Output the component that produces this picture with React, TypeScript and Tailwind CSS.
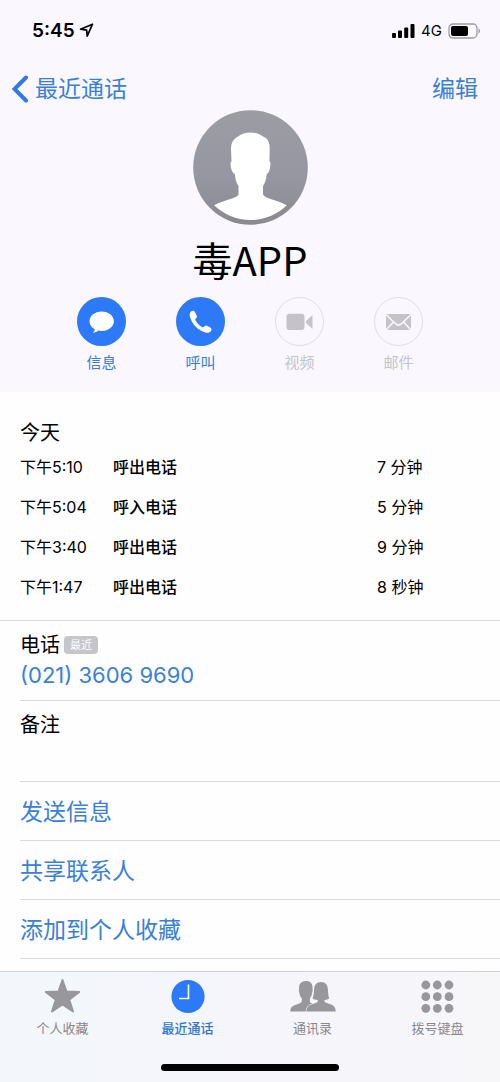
import type { ReactNode } from 'react'

interface Call {
  time: string
  type: string
  duration: string
}

interface Action {
  label: string
  icon: ReactNode
  disabled?: boolean
}

interface Tab {
  label: string
  icon: ReactNode
  active?: boolean
}

const calls: Call[] = [
  { time: '下午5:10', type: '呼出电话', duration: '7 分钟' },
  { time: '下午5:04', type: '呼入电话', duration: '5 分钟' },
  { time: '下午3:40', type: '呼出电话', duration: '9 分钟' },
  { time: '下午1:47', type: '呼出电话', duration: '8 秒钟' },
]

const links = ['发送信息', '共享联系人', '添加到个人收藏']

const actions: Action[] = [
  {
    label: '信息',
    icon: (
      <svg className="shrink-0" width="49" height="49" viewBox="0 0 49 49" fill="#fff">
        <path d="M24.7 14.5c-6.8 0-12.2 4.3-12.2 9.7 0 3.3 2 6.200 5.200 8 .1 1.400-.7 2.600-1.900 3.700 2.400-.1 4.300-1 5.500-2.300 1.100.2 2.200.3 3.400.3 6.800 0 12.200-4.300 12.200-9.700s-5.400-9.700-12.200-9.700z" />
      </svg>
    ),
  },
  {
    label: '呼叫',
    icon: (
      <svg className="shrink-0" width="49" height="49" viewBox="0 0 49 49" fill="#fff">
        <path d="M15.200 14.300c1.500-.9 3-.6 3.700.8l1.800 3.300c.6 1.200.3 2.100-.7 2.800-.8.600-.9 1.300-.4 2.300 1.500 2.700 3.700 4.900 6.400 6.400 1 .5 1.600.3 2.200-.5.800-1 1.700-1.300 2.900-.7l3.200 1.800c1.300.7 1.600 2 .8 3.300-1.300 2-3.300 2.500-5.700 1.700-7.200-2.300-12.800-7.600-15.200-14.700-.9-2.600-.7-5.200 1-6.500z" />
      </svg>
    ),
  },
  {
    label: '视频',
    disabled: true,
    icon: (
      <svg className="shrink-0" width="49" height="49" viewBox="0 0 49 49" fill="#c4c3c8">
        <rect x="11.500" y="16.800" width="18" height="16.200" rx="3" />
        <path d="M31 24 37.500 18v14L31 26z" />
      </svg>
    ),
  },
  {
    label: '邮件',
    disabled: true,
    icon: (
      <svg className="shrink-0" width="49" height="49" viewBox="0 0 49 49">
        <rect x="12" y="17" width="25" height="16" fill="#c4c3c8" />
        <path
          d="M12 17.500l9.500 9.200c2 1.800 4 1.800 6 0l9.500-9.200M12 33l7.500-8M37 33l-7.500-8"
          fill="none"
          stroke="#faf8fe"
          strokeWidth="1.600"
        />
      </svg>
    ),
  },
]

const tabs: Tab[] = [
  {
    label: '个人收藏',
    icon: (
      <svg width="46" height="36" viewBox="0 0 46 36" fill="#98979c" stroke="#98979c" strokeWidth="2" strokeLinejoin="round">
        <path d="M22.500 2l4 11.600 12.700.3-10 7.700L33 33.500 22.500 26.500 12 33.500l3.800-11.900-10-7.700 12.700-.3z" />
      </svg>
    ),
  },
  {
    label: '最近通话',
    active: true,
    icon: (
      <svg width="46" height="36" viewBox="0 0 46 36">
        <circle cx="23" cy="18.500" r="16.600" fill="#2d7af8" />
        <path d="M23.500 6.500v14h-9.500" fill="none" stroke="#fff" strokeWidth="1.600" />
      </svg>
    ),
  },
  {
    label: '通讯录',
    icon: (
      <svg width="46" height="36" viewBox="0 0 46 36" fill="#98979c">
        <path d="M16 3c4.300 0 6.800 2.700 6.500 6.900l.2 2.300-.6 3c-.4 2.200-1.200 3.800-2.200 5.100v4l2.600 1.500c-3.500 1.300-5.600 3.200-6 7.700H.3c.2-4.300 2-5.700 5.500-6.800 2.900-.9 5.500-1.600 6-3.100v-3.300c-1.200-1.200-2-2.900-2.300-4.800l-.7-3 .3-2.300c-.4-4.300 2.400-7.200 6.900-7.200z" />
        <path
          d="M31 4c4.800 0 6.800 3 7 8.300.1 3.800.4 6 1.200 8-1.400 1.200-2.900 1.700-4.700 1.600v1.600c.8 1.400 3.400 1.900 6 2.800 3.400 1.100 5 3.200 5.300 7.200h-29.600c.3-4 2.300-6.100 5.600-7.200 2.600-.9 5.200-1.400 6-2.800v-1.600c-2 .1-3.900-.4-5.300-1.600.9-2 1.400-4.200 1.500-8C24.200 7 26.400 4 31 4z"
          stroke="#f6f5fa"
          strokeWidth="1.200"
          paintOrder="stroke"
        />
      </svg>
    ),
  },
  {
    label: '拨号键盘',
    icon: (
      <svg width="46" height="36" viewBox="0 0 46 36" fill="#98979c">
        {[7, 18.700, 30.300].map(y =>
          [10.800, 22.300, 34].map(x => <circle key={`${x}-${y}`} cx={x} cy={y} r="4.400" />)
        )}
      </svg>
    ),
  },
]

function StatusBar() {
  return (
    <div className="flex h-15 items-center justify-between pl-8 pr-[19px] pt-px">
      <div className="flex items-center gap-1">
        <span className="text-[19px] font-semibold leading-6">5:45</span>
        <svg width="15" height="15" viewBox="0 0 15 15" fill="none" stroke="#000" strokeWidth="1.700" strokeLinejoin="round">
          <path d="M13.500 1.200 1.500 6.200l6.200 1 .5 6z" />
        </svg>
      </div>
      <div className="flex items-center gap-1.5">
        <svg width="24" height="16" viewBox="0 0 24 16">
          <rect x="1" y="10" width="4" height="5" rx="1" />
          <rect x="7" y="7.500" width="4" height="7.500" rx="1" />
          <rect x="13.200" y="4.500" width="4" height="10.500" rx="1" />
          <rect x="19.500" y="1" width="4" height="14" rx="1" />
        </svg>
        <span className="text-[15px] leading-6">4G</span>
        <svg width="33" height="16" viewBox="0 0 33 16">
          <rect x="1" y="1" width="28" height="14" rx="4" fill="none" stroke="#9b9a9f" strokeWidth="1.300" />
          <rect x="3" y="3" width="17" height="10" rx="2" />
          <path d="M30.500 5.500c2 .6 2 4.400 0 5z" fill="#9b9a9f" />
        </svg>
      </div>
    </div>
  )
}

function Avatar() {
  return (
    <svg className="mx-auto" width="115" height="115" viewBox="0 0 115 115">
      <defs>
        <linearGradient id="avatarBg" x1="0" y1="0" x2="0" y2="1">
          <stop offset="0" stopColor="#9c9da3" />
          <stop offset="0.6" stopColor="#9696a2" />
          <stop offset="1" stopColor="#89898e" />
        </linearGradient>
        <clipPath id="avatarClip">
          <circle cx="57.500" cy="57.500" r="52.500" />
        </clipPath>
      </defs>
      <circle cx="57.500" cy="57.500" r="57.300" fill="url(#avatarBg)" />
      <path
        clipPath="url(#avatarClip)"
        fill="#fff"
        d="M57.500 22.500c5 0 9 1.500 12.500 4 4.500 1.500 6.700 5.500 6.700 11.500l-.2 13.500c1.500.2 1 4.500.2 7.500-.5 2.500-1.300 4.600-3 4.900-.4 4.500-1.200 8.500-3.700 12.100v8.500c1.500 2.500 5.500 3.900 10 5.300 6.500 2.100 11 3.700 14.500 6.200V115H20V96c3.500-2.500 9-4.100 15-6.200 4.500-1.400 9-2.800 10.500-5.300V76c-2.500-3.600-3.300-7.600-3.700-12.100-1.700-.3-2.800-2.400-3.500-4.900-.8-3-1.300-7.300.2-7.500L38 39c0-6.500 2.500-10 7-12.500 3.500-2.500 7.500-4 12.500-4z"
      />
    </svg>
  )
}

export default function App() {
  return (
    <div className="flex min-h-screen flex-col bg-[#fefefe] font-['Inter','Noto_Sans_CJK_SC',sans-serif] text-black">
      {/* 顶部信息 */}
      <header className="bg-[#faf8fe] pb-[17px]">
        <StatusBar />
        <nav className="flex h-[50px] items-center justify-between pb-px pl-3 pr-[22px] pt-2 text-[23px] leading-8 text-[#3b80d8]">
          <button className="flex items-center gap-1.5">
            <svg width="17" height="28" viewBox="0 0 17 28" fill="none" stroke="#3079e6" strokeWidth="4" strokeLinecap="round">
              <path d="M14 2.500 2.500 14 14 25.500" />
            </svg>
            最近通话
          </button>
          <button>编辑</button>
        </nav>

        <Avatar />
        <h1 className="mt-1 text-center font-['Noto_Sans_CJK_SC',sans-serif] text-[40px] leading-[60px]">毒APP</h1>

        <div className="mx-auto mt-2 flex w-[346px] justify-between">
          {actions.map(action => (
            <button
              key={action.label}
              disabled={action.disabled}
              className={`flex flex-col items-center gap-[5px] text-[15px] leading-6 ${
                action.disabled ? 'text-[#c4c3c8]' : 'text-[#3b80d0]'
              }`}
            >
              <span
                className={`flex size-[49px] items-center justify-center rounded-full ${
                  action.disabled ? 'border border-[#dfdde3]' : 'bg-[#2d7af8]'
                }`}
              >
                {action.icon}
              </span>
              {action.label}
            </button>
          ))}
        </div>
      </header>

      {/* 通话记录 */}
      <section className="border-b border-[#d9d8dc] pb-[13px] pl-5 pt-[27px]">
        <h2 className="text-xl leading-7">今天</h2>
        <table className="w-full table-fixed text-left text-base">
          <tbody>
            {calls.map(call => (
              <tr key={call.time} className="h-10">
                <td className="w-[93px]">{call.time}</td>
                <td className="font-medium">{call.type}</td>
                <td className="w-[123px]">{call.duration}</td>
              </tr>
            ))}
          </tbody>
        </table>
      </section>

      <section className="pl-5">
        <div className="h-20 border-b border-[#d9d8dc] pt-2.5">
          <div className="flex items-center gap-1">
            <h2 className="text-xl leading-7">电话</h2>
            <span className="rounded-sm bg-[#c6c5ca] px-1.5 text-[11px] leading-[18px] text-white">最近</span>
          </div>
          <a href="tel:02136069690" className="block text-[22px] leading-8 text-[#3b80d8]">
            (021) 3606 9690
          </a>
        </div>
        <div className="h-[81px] border-b border-[#d9d8dc] pt-2">
          <h2 className="text-xl leading-8">备注</h2>
        </div>
        {links.map(link => (
          <button
            key={link}
            className="block h-[59px] w-full border-b border-[#d9d8dc] pt-0.5 text-left text-[23px] text-[#3b80d8]"
          >
            {link}
          </button>
        ))}
      </section>

      {/* 底部导航 */}
      <footer className="sticky bottom-0 mt-auto border-t border-[#d3d2d6] bg-gradient-to-r from-[#f3f7fb] via-[#f5f5fb] to-[#f7f6f9] pb-[11px]">
        <nav className="grid grid-cols-4 pt-1.5">
          {tabs.map(tab => (
            <button
              key={tab.label}
              className={`flex flex-col items-center text-[13px] ${
                tab.active ? 'font-medium text-[#2d78d0]' : 'text-[#88878c]'
              }`}
            >
              {tab.icon}
              <span className="mt-1 leading-5">{tab.label}</span>
            </button>
          ))}
        </nav>
        <div className="mx-auto mt-[26px] h-[7px] w-[178px] rounded-full bg-black" />
      </footer>
    </div>
  )
}
